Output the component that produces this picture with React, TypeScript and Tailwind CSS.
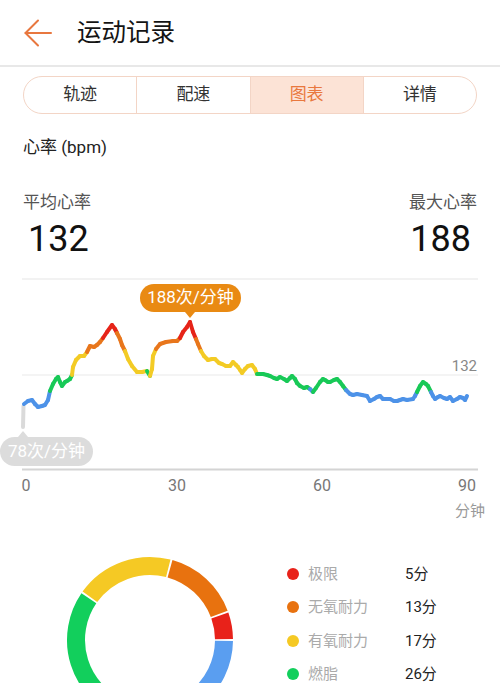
import React from 'react';

const RED = '#e62419';
const ORANGE = '#e8761c';
const YELLOW = '#f3cb25';
const GREEN = '#18c957';
const BLUE = '#4d92e8';

// heart rate trace, page coordinates
const trace: [number, number][] = [
  [24, 405], [28, 402], [32, 401], [35, 405], [38, 408], [42, 407], [45, 406], [48, 401], [50, 392], [53, 385],
  [56, 380], [58, 378], [60, 383], [62, 387], [65, 383], [67, 382], [70, 380], [72, 376], [73, 368], [76, 361],
  [80, 357], [84, 357], [87, 353], [90, 347], [94, 348], [97, 346], [100, 343], [103, 339], [107, 333], [112, 326],
  [115, 330], [117, 334], [120, 340], [122, 346], [125, 352], [128, 360], [132, 367], [137, 373], [142, 373],
  [147, 372], [150, 377], [152, 370], [153, 357], [156, 350], [160, 345], [166, 343], [173, 342], [177, 342],
  [180, 339], [183, 333], [187, 328], [190, 323], [193, 333], [196, 340], [198, 345], [201, 352], [204, 357],
  [208, 361], [212, 360], [215, 360], [219, 364], [222, 365], [226, 367], [230, 367], [233, 363], [236, 366],
  [238, 368], [240, 371], [242, 374], [245, 370], [248, 367], [252, 366], [255, 370], [257, 375], [263, 375],
  [267, 376], [270, 377], [274, 379], [277, 380], [280, 378], [284, 380], [287, 382], [290, 379], [292, 377],
  [295, 380], [297, 384], [300, 387], [304, 389], [307, 388], [310, 390], [313, 393], [316, 389], [320, 383],
  [323, 380], [325, 381], [328, 383], [330, 383], [334, 381], [337, 380], [340, 383], [343, 387], [346, 391],
  [350, 395], [353, 396], [357, 395], [362, 396], [367, 397], [370, 402], [374, 400], [377, 398], [380, 397],
  [383, 400], [387, 400], [390, 400], [394, 402], [397, 402], [400, 401], [403, 400], [407, 401], [413, 400],
  [415, 397], [417, 393], [420, 387], [423, 383], [426, 385], [428, 387], [431, 393], [433, 397], [435, 400],
  [438, 398], [440, 397], [444, 399], [447, 400], [450, 398], [453, 402], [457, 400], [460, 398], [463, 399],
  [465, 401], [467, 397],
];

function zoneColor(y: number) {
  if (y < 337) return RED;
  if (y < 353) return ORANGE;
  if (y < 374) return YELLOW;
  if (y < 391.5) return GREEN;
  return BLUE;
}

const zones = [
  { label: '极限', value: '5分', color: '#e8221a', from: 0, to: 20 },
  { label: '无氧耐力', value: '13分', color: '#e8720f', from: 20, to: 75 },
  { label: '有氧耐力', value: '17分', color: '#f5c924', from: 75, to: 145 },
  { label: '燃脂', value: '26分', color: '#12cf5c', from: 145, to: 250 },
  { label: '热身', value: '29分', color: '#5a9ef0', from: 250, to: 360 },
];

function arcPath(a0: number, a1: number, r: number) {
  const cx = 90;
  const cy = 100;
  const pt = (a: number) => [cx + r * Math.cos((a * Math.PI) / 180), cy - r * Math.sin((a * Math.PI) / 180)];
  const [x0, y0] = pt(a0);
  const [x1, y1] = pt(a1);
  const large = a1 - a0 > 180 ? 1 : 0;
  return `M ${x0} ${y0} A ${r} ${r} 0 ${large} 0 ${x1} ${y1}`;
}

const tabs = ['轨迹', '配速', '图表', '详情'];

export default function App() {
  return (
    <div className="w-[500px] h-[683px] overflow-hidden bg-white text-[#222] font-[family-name:Roboto,'Noto_Sans_CJK_SC',sans-serif]">
      {/* header */}
      <div className="flex items-center h-[67px] pl-[24px] border-b-2 border-[#e8e8e8]">
        <svg width="28" height="28" viewBox="0 0 28 28" fill="none" stroke="#e8773f" strokeWidth="2" strokeLinecap="round" strokeLinejoin="round">
          <path d="M27 14H1.5" />
          <path d="M14 1.5L1.5 14L14 26.5" />
        </svg>
        <span className="ml-[25px] text-[24.5px] leading-[32px] text-[#141414]">运动记录</span>
      </div>

      {/* tabs */}
      <div className="mx-[23px] mt-[9px] h-[38px] flex rounded-full border border-[#f3d5c6] overflow-hidden">
        {tabs.map((t, i) => (
          <div
            key={t}
            className={`flex-1 flex items-center justify-center text-[17px] ${i > 0 ? 'border-l border-[#f3d5c6]' : ''} ${
              i === 2 ? 'bg-[#fce3d6] text-[#e9783e]' : 'text-[#333]'
            }`}
          >
            {t}
          </div>
        ))}
      </div>

      {/* heart rate summary */}
      <div className="px-[23px]">
        <div className="mt-[22px] text-[17px] leading-[22px] text-[#222]">心率 (bpm)</div>
        <div className="mt-[33px] flex justify-between text-[17px] leading-[22px] text-[#555]">
          <span>平均心率</span>
          <span>最大心率</span>
        </div>
        <div className="mt-[6px] flex justify-between text-[36px] leading-[40px] text-[#111]">
          <span className="ml-[5px]">132</span>
          <span className="mr-[6px]">188</span>
        </div>
      </div>

      {/* chart */}
      <div className="relative mt-[10px] h-[255px]">
        <svg className="absolute inset-0" width="500" height="255" viewBox="0 270 500 255">
          <line x1="22" y1="280" x2="478" y2="280" stroke="#eeeeee" strokeWidth="1.5" />
          <line x1="22" y1="376" x2="478" y2="376" stroke="#f1f1f1" strokeWidth="1.5" />
          <line x1="22" y1="470.5" x2="478" y2="470.5" stroke="#d4d4d4" strokeWidth="2" />
          <line x1="23" y1="428" x2="23.5" y2="407" stroke="#dadada" strokeWidth="4" strokeLinecap="round" />
          {trace.slice(1).map(([x, y], i) => {
            const [px, py] = trace[i];
            return (
              <line
                key={i}
                x1={px}
                y1={py}
                x2={x}
                y2={y}
                stroke={zoneColor((py + y) / 2)}
                strokeWidth="4"
                strokeLinecap="round"
              />
            );
          })}
        </svg>

        {/* max tooltip */}
        <div className="absolute left-[140px] top-[15px] w-[101px] h-[28px] rounded-full bg-[#e98a13] flex items-center justify-center text-white text-[17px]">
          188次/分钟
        </div>
        <div className="absolute left-[185px] top-[43px] w-0 h-0 border-x-[5px] border-x-transparent border-t-[6px] border-t-[#e98a13]" />

        {/* min tooltip */}
        <div className="absolute left-[18px] top-[162px] w-0 h-0 border-x-[5px] border-x-transparent border-b-[6px] border-b-[#dcdcdc]" />
        <div className="absolute left-0 top-[168px] w-[93px] h-[29px] rounded-full bg-[#dcdcdc] flex items-center justify-center text-white text-[17px]">
          78次/分钟
        </div>

        <span className="absolute right-[23px] top-[87px] text-[15px] leading-[20px] text-[#888]">132</span>

        {/* x axis */}
        <span className="absolute left-[26px] top-[206px] -translate-x-1/2 text-[16px] leading-[22px] text-[#777]">0</span>
        <span className="absolute left-[177px] top-[206px] -translate-x-1/2 text-[16px] leading-[22px] text-[#777]">30</span>
        <span className="absolute left-[322px] top-[206px] -translate-x-1/2 text-[16px] leading-[22px] text-[#777]">60</span>
        <span className="absolute left-[467px] top-[206px] -translate-x-1/2 text-[16px] leading-[22px] text-[#777]">90</span>
        <span className="absolute right-[15px] top-[231px] text-[15px] leading-[22px] text-[#999]">分钟</span>
      </div>

      {/* zones */}
      <div className="flex">
        <svg className="ml-[60px] mt-[16px] shrink-0" width="180" height="200" viewBox="0 0 180 200">
          {zones.map((z) => (
            <path key={z.label} d={arcPath(z.from + 0.7, z.to - 0.7, 74)} fill="none" stroke={z.color} strokeWidth="18" />
          ))}
        </svg>
        <div className="ml-[47px] mt-[33px] flex flex-col">
          {zones.map((z) => (
            <div key={z.label} className="flex items-center h-[33.5px]">
              <span className="w-3 h-3 rounded-full shrink-0" style={{ backgroundColor: z.color }} />
              <span className="ml-[9px] w-[97px] text-[15px] text-[#aaa]">{z.label}</span>
              <span className="text-[15px] text-[#222]">{z.value}</span>
            </div>
          ))}
        </div>
      </div>
    </div>
  );
}
